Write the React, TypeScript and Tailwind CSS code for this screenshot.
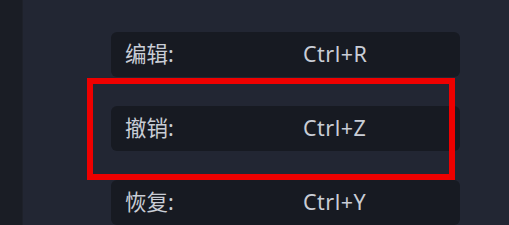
import React from 'react'

const shortcuts = [
  { label: '编辑:', keys: 'Ctrl+R' },
  { label: '撤销:', keys: 'Ctrl+Z' },
  { label: '恢复:', keys: 'Ctrl+Y' },
]

const App: React.FC = () => {
  return (
    <div
      className="flex w-[509px] h-[225px] overflow-hidden bg-[#222633]"
      style={{ fontFamily: '"Noto Sans", "Noto Sans CJK SC", sans-serif' }}
    >
      <div className="w-[23px] shrink-0 bg-[#1a1d25] border-r border-[#1e212a]" />
      <div className="flex-1 flex flex-col pl-[88px]">
        <div className="h-[33px] overflow-hidden">
          <div className="-mt-[21px] pl-[30px] text-[20px] leading-[24px] text-[#c9cdd6]">快捷键</div>
        </div>
        <div className="relative flex flex-col gap-[29px] w-[349px]">
          {shortcuts.map((s) => (
            <div
              key={s.keys}
              className="flex items-center h-[45px] px-[14px] rounded-md bg-[#171a22] text-[21.5px] text-[#c9cdd6]"
            >
              <span className="w-[178px]">{s.label}</span>
              <span className="tracking-[0.5px]">{s.keys}</span>
            </div>
          ))}
          <div className="absolute left-[-24px] top-[46px] w-[368px] h-[102px] border-[6px] border-[#ee0000] pointer-events-none" />
        </div>
      </div>
    </div>
  )
}

export default App
